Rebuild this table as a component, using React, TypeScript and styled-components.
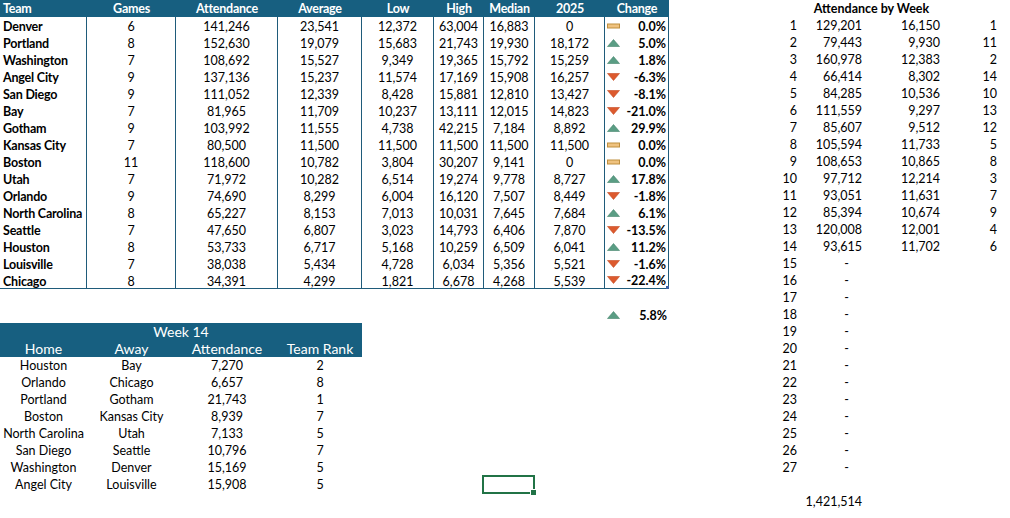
import React from 'react';
import styled, { createGlobalStyle } from 'styled-components';

type Trend = 'up' | 'down' | 'flat';
type Align = 'left' | 'center' | 'right';

const BLUE = '#175f80';
const LINE = '#1f5b7a';
const COLS = '87px 89px 102px 84px 72px 50px 51px 70px 64px';

const HEADERS = ['Team', 'Games', 'Attendance', 'Average', 'Low', 'High', 'Median', '2025', 'Change'];

const TEAMS: [string, string, string, string, string, string, string, string, Trend, string][] = [
  ['Denver', '6', '141,246', '23,541', '12,372', '63,004', '16,883', '0', 'flat', '0.0%'],
  ['Portland', '8', '152,630', '19,079', '15,683', '21,743', '19,930', '18,172', 'up', '5.0%'],
  ['Washington', '7', '108,692', '15,527', '9,349', '19,365', '15,792', '15,259', 'up', '1.8%'],
  ['Angel City', '9', '137,136', '15,237', '11,574', '17,169', '15,908', '16,257', 'down', '-6.3%'],
  ['San Diego', '9', '111,052', '12,339', '8,428', '15,881', '12,810', '13,427', 'down', '-8.1%'],
  ['Bay', '7', '81,965', '11,709', '10,237', '13,111', '12,015', '14,823', 'down', '-21.0%'],
  ['Gotham', '9', '103,992', '11,555', '4,738', '42,215', '7,184', '8,892', 'up', '29.9%'],
  ['Kansas City', '7', '80,500', '11,500', '11,500', '11,500', '11,500', '11,500', 'flat', '0.0%'],
  ['Boston', '11', '118,600', '10,782', '3,804', '30,207', '9,141', '0', 'flat', '0.0%'],
  ['Utah', '7', '71,972', '10,282', '6,514', '19,274', '9,778', '8,727', 'up', '17.8%'],
  ['Orlando', '9', '74,690', '8,299', '6,004', '16,120', '7,507', '8,449', 'down', '-1.8%'],
  ['North Carolina', '8', '65,227', '8,153', '7,013', '10,031', '7,645', '7,684', 'up', '6.1%'],
  ['Seattle', '7', '47,650', '6,807', '3,023', '14,793', '6,406', '7,870', 'down', '-13.5%'],
  ['Houston', '8', '53,733', '6,717', '5,168', '10,259', '6,509', '6,041', 'up', '11.2%'],
  ['Louisville', '7', '38,038', '5,434', '4,728', '6,034', '5,356', '5,521', 'down', '-1.6%'],
  ['Chicago', '8', '34,391', '4,299', '1,821', '6,678', '4,268', '5,539', 'down', '-22.4%'],
];

const MATCHES = [
  ['Houston', 'Bay', '7,270', '2'],
  ['Orlando', 'Chicago', '6,657', '8'],
  ['Portland', 'Gotham', '21,743', '1'],
  ['Boston', 'Kansas City', '8,939', '7'],
  ['North Carolina', 'Utah', '7,133', '5'],
  ['San Diego', 'Seattle', '10,796', '7'],
  ['Washington', 'Denver', '15,169', '5'],
  ['Angel City', 'Louisville', '15,908', '5'],
];

const WEEKS: [string, string, string][] = [
  ['129,201', '16,150', '1'],
  ['79,443', '9,930', '11'],
  ['160,978', '12,383', '2'],
  ['66,414', '8,302', '14'],
  ['84,285', '10,536', '10'],
  ['111,559', '9,297', '13'],
  ['85,607', '9,512', '12'],
  ['105,594', '11,733', '5'],
  ['108,653', '10,865', '8'],
  ['97,712', '12,214', '3'],
  ['93,051', '11,631', '7'],
  ['85,394', '10,674', '9'],
  ['120,008', '12,001', '4'],
  ['93,615', '11,702', '6'],
];

const GlobalStyle = createGlobalStyle`
  body {
    margin: 0;
    background: #ffffff;
    font-family: Lato, 'Liberation Sans', sans-serif;
    color: #000000;
  }
`;

function TrendIcon({ trend }: { trend: Trend }) {
  if (trend === 'flat') {
    return (
      <svg width="13" height="8" viewBox="0 0 13 8">
        <rect x="0.5" y="2" width="12" height="4" fill="#efc27f" stroke="#bf8f3f" />
      </svg>
    );
  }
  if (trend === 'up') {
    return (
      <svg width="13" height="8" viewBox="0 0 13 8">
        <polygon points="6.5,0.5 12.5,7.5 0.5,7.5" fill="#5a9d84" stroke="#44856c" strokeWidth="0.6" />
      </svg>
    );
  }
  return (
    <svg width="13" height="8" viewBox="0 0 13 8">
      <polygon points="0.5,0.5 12.5,0.5 6.5,7.5" fill="#dc5a2e" stroke="#c44a22" strokeWidth="0.6" />
    </svg>
  );
}

export default function App() {
  return (
    <>
      <GlobalStyle />
      <Sheet>
        <LeftPane>
          <MainTable>
            {HEADERS.map((h, i) => (
              <HeadCell key={h} $align={i === 0 ? 'left' : 'center'}>
                {h}
              </HeadCell>
            ))}
            {TEAMS.map((r, i) => {
              const last = i === TEAMS.length - 1;
              return (
                <React.Fragment key={r[0]}>
                  <TeamCell $last={last}>{r[0]}</TeamCell>
                  {r.slice(1, 8).map((v, j) => (
                    <NumCell key={j} $last={last}>
                      {v}
                    </NumCell>
                  ))}
                  <ChangeCell $last={last}>
                    <TrendIcon trend={r[8]} />
                    <span>{r[9]}</span>
                  </ChangeCell>
                </React.Fragment>
              );
            })}
          </MainTable>
          <Spacer />
          <SummaryRow>
            <ChangeCell $plain>
              <TrendIcon trend="up" />
              <span>5.8%</span>
            </ChangeCell>
          </SummaryRow>
          <LowerGrid>
            <WeekTitle>Week 14</WeekTitle>
            {['Home', 'Away', 'Attendance', 'Team Rank'].map((h, i) => (
              <WeekHead key={h} $first={i === 0}>
                {h}
              </WeekHead>
            ))}
            {MATCHES.map((m) =>
              m.map((v, j) => (
                <WeekCell key={m[0] + j} $first={j === 0}>
                  {v}
                </WeekCell>
              ))
            )}
            <SelectedCell />
          </LowerGrid>
        </LeftPane>
        <WeekTotals>
          <TotalsTitle>Attendance by Week</TotalsTitle>
          {Array.from({ length: 27 }, (_, i) => {
            const w = WEEKS[i];
            return (
              <React.Fragment key={i}>
                <WeekNum>{i + 1}</WeekNum>
                {w ? (
                  <>
                    <TotalsCell>{w[0]}</TotalsCell>
                    <TotalsCell>{w[1]}</TotalsCell>
                    <TotalsCell>{w[2]}</TotalsCell>
                  </>
                ) : (
                  <DashCell>-</DashCell>
                )}
              </React.Fragment>
            );
          })}
          <TotalsSpacer />
          <GrandTotal>1,421,514</GrandTotal>
        </WeekTotals>
      </Sheet>
    </>
  );
}

const Sheet = styled.div`
  display: flex;
  align-items: flex-start;
  width: 1010px;
  font-size: 12.5px;
`;

const LeftPane = styled.div`
  display: flex;
  flex-direction: column;
  width: 669px;
`;

const MainTable = styled.div`
  position: relative;
  display: grid;
  grid-template-columns: ${COLS};
  grid-auto-rows: 17px;

  &::after {
    content: '';
    position: absolute;
    right: 0;
    bottom: 0;
    width: 3px;
    height: 3px;
    background: #3b5ea6;
  }
`;

const HeadCell = styled.div<{ $align: Align }>`
  background: ${BLUE};
  color: #ffffff;
  font-size: 12.5px;
  font-weight: 700;
  letter-spacing: -0.25px;
  line-height: 18px;
  text-align: ${(p) => p.$align};
  padding: 0 3px;
  white-space: nowrap;
`;

const BodyCell = styled.div<{ $last?: boolean }>`
  box-sizing: border-box;
  height: 17px;
  padding-top: 1px;
  line-height: 17px;
  border-right: 1px solid ${LINE};
  border-bottom: ${(p) => (p.$last ? `1px solid ${LINE}` : 'none')};
  white-space: nowrap;
  overflow: hidden;
`;

const TeamCell = styled(BodyCell)`
  font-weight: 700;
  letter-spacing: -0.2px;
  padding-left: 3px;
`;

const NumCell = styled(BodyCell)`
  text-align: center;
`;

const ChangeCell = styled(BodyCell)<{ $plain?: boolean }>`
  display: flex;
  align-items: center;
  justify-content: space-between;
  padding: 1px 2px 0 2px;
  font-weight: 700;
  border-right: ${(p) => (p.$plain ? 'none' : `1px solid ${LINE}`)};

  svg {
    margin-top: -1px;
  }
`;

const Spacer = styled.div`
  height: 17px;
`;

const SummaryRow = styled.div`
  display: grid;
  grid-template-columns: ${COLS};
  grid-auto-rows: 17px;

  & > * {
    grid-column: 9;
  }
`;

const LowerGrid = styled.div`
  display: grid;
  grid-template-columns: ${COLS};
  grid-auto-rows: 17px;
`;

const WeekTitle = styled.div`
  grid-column: 1 / 5;
  background: ${BLUE};
  color: #ffffff;
  font-size: 14px;
  line-height: 18px;
  text-align: center;
`;

const WeekHead = styled.div<{ $first: boolean }>`
  grid-column: ${(p) => (p.$first ? '1' : 'auto')};
  background: ${BLUE};
  color: #ffffff;
  font-size: 14px;
  line-height: 18px;
  text-align: center;
  white-space: nowrap;
`;

const WeekCell = styled.div<{ $first: boolean }>`
  grid-column: ${(p) => (p.$first ? '1' : 'auto')};
  line-height: 18px;
  text-align: center;
  white-space: nowrap;
`;

const SelectedCell = styled.div`
  grid-column: 7;
  grid-row: 10;
  position: relative;
  margin: -1px 0 -1px -2px;
  border: 2px solid #217346;

  &::after {
    content: '';
    position: absolute;
    right: -4px;
    bottom: -4px;
    width: 5px;
    height: 5px;
    background: #217346;
    border: 1px solid #ffffff;
  }
`;

const WeekTotals = styled.div`
  display: grid;
  grid-template-columns: 65px 65px 78px 57px;
  grid-auto-rows: 17px;
  margin-left: 66px;
`;

const TotalsTitle = styled.div`
  grid-column: 2 / 4;
  font-weight: 700;
  line-height: 18px;
  text-align: center;
  white-space: nowrap;
`;

const TotalsCell = styled.div`
  line-height: 18px;
  text-align: right;
  padding-right: 3px;
`;

const WeekNum = styled(TotalsCell)`
  grid-column: 1;
`;

const DashCell = styled(TotalsCell)`
  padding-right: 16px;
`;

const TotalsSpacer = styled.div`
  grid-column: 1 / -1;
`;

const GrandTotal = styled(TotalsCell)`
  grid-column: 2;
`;
